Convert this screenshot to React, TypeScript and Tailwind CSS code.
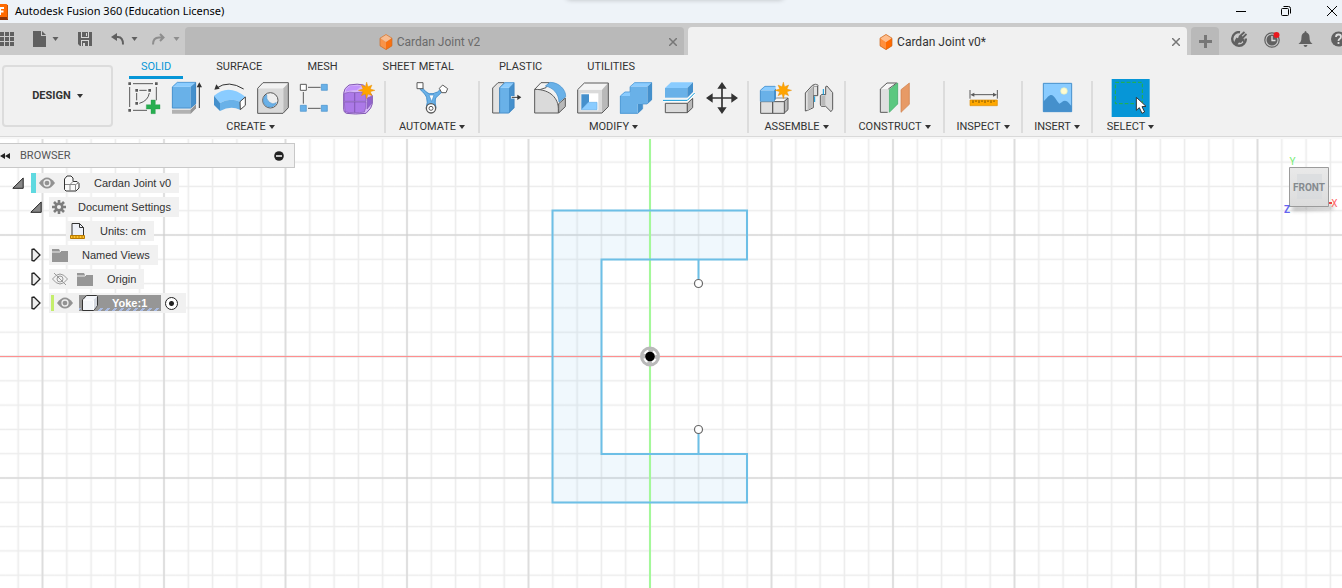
import React from "react";

const INK = "#5a5a5a";
const LIGHT = "#8accff";
const BLUE = "#69b1e8";
const DEEP = "#4590cc";

const STAR =
  "0,-25 4,-11 16,-16 11,-4 25,0 11,4 16,16 4,11 0,25 -4,11 -16,16 -11,4 -25,0 -11,-4 -16,-16 -4,-11";

function Glyph({ children }: { children: React.ReactNode }) {
  return (
    <svg viewBox="0 0 129 114" className="h-[38px] w-[43px]" aria-hidden="true">
      {children}
    </svg>
  );
}

function Caret({ className = "" }: { className?: string }) {
  return (
    <svg viewBox="0 0 6 4" className={`h-1 w-1.5 ${className}`} aria-hidden="true">
      <path d="M0 0h6L3 4z" fill="currentColor" />
    </svg>
  );
}

const SketchIcon = () => (
  <Glyph>
    <path d="M33 14h60M23 24v60M33 94h42M103 24v40M52 34h22M44 42v22M82 42q-4 24-30 31" fill="none" stroke={INK} strokeWidth="3" />
    <path d="M19 10h8v8h-8zM99 10h8v8h-8zM19 90h8v8h-8zM40 30h8v8h-8zM79 30h8v8h-8zM40 69h8v8h-8z" fill={INK} />
    <path d="M87 63h13v14h14v13h-14v14H87V90H73V77h14z" fill="#27ae50" stroke="#1f9445" strokeWidth="1" />
  </Glyph>
);

const ExtrudeIcon = () => (
  <Glyph>
    <path d="M21 92h56l16-16v12l-16 16H21z" fill="#b2b2b2" />
    <path d="M77 92l16-16v12l-16 16z" fill="#969696" />
    <path d="M21 23h56v65H21z" fill={BLUE} />
    <path d="M21 23L37 9h56L77 23z" fill={LIGHT} />
    <path d="M77 23L93 9v65L77 88z" fill={DEEP} />
    <path d="M22 24L37 10h55v64L77 87H22z" fill="none" stroke="#3c84bf" strokeWidth="2" />
    <path d="M103 20v67" stroke="#333" strokeWidth="3" />
    <path d="M103 10l8 15H95z" fill="#333" />
  </Glyph>
);

const RevolveIcon = () => (
  <Glyph>
    <path d="M26 27Q62 2 107 30" fill="none" stroke="#333" strokeWidth="3" />
    <path d="M19 32l6-16 10 13z" fill="#333" />
    <path d="M18 50Q62 12 113 54L96 68Q66 55 36 72z" fill={LIGHT} />
    <path d="M18 50l18 22v24L18 78z" fill={DEEP} />
    <path d="M36 72q30-17 60-4v24q-28-14-60 4z" fill={BLUE} />
    <path d="M96 68l16-14v25L97 92z" fill="#fff" stroke="#444" strokeWidth="3" />
  </Glyph>
);

const HoleIcon = () => (
  <Glyph>
    <path d="M19 28h78v75H19z" fill="#dadada" />
    <path d="M19 28l16-17h78L97 28z" fill="#f2f2f2" />
    <path d="M97 28l16-17v75l-16 17z" fill="#b9b9b9" />
    <path d="M20 28l16-17h76v75l-16 17H20z" fill="none" stroke={INK} strokeWidth="3" />
    <circle cx="58" cy="64" r="23" fill="#eee" stroke={INK} strokeWidth="3" />
    <path d="M47 47a20 20 0 1 0 29 24Q66 79 55 70T47 47z" fill={BLUE} stroke={DEEP} strokeWidth="2" />
  </Glyph>
);

const PatternIcon = () => (
  <Glyph>
    <path d="M42 25h38M28 39v35M42 88h38" stroke={INK} strokeWidth="3" />
    <path d="M19 16h18v18H19z" fill="#fff" stroke={INK} strokeWidth="3" />
    <path d="M82 16h18v18H82zM19 79h18v18H19zM82 79h18v18H82z" fill={BLUE} stroke={DEEP} strokeWidth="2" />
  </Glyph>
);

const FormIcon = () => (
  <Glyph>
    <path d="M20 43q0-15 16-25 27-5 44 0l26 32v24q-1 13-19 29-33 4-59 0-8-3-8-12z" fill="#d6b8f8" stroke="#8459b4" strokeWidth="3" />
    <path d="M22 43q17-6 31-2v26H22zM53 41q18-3 33 2l1 24H53zM22 69h31v31q-18 3-29-2zM53 69h34q0 20-5 30-13 3-29 2z" fill="#ac79e8" stroke="#8459b4" strokeWidth="2" />
    <path d="M27 32q8-12 18-12l29 0-15 14q-20-2-32 4z" fill="#c393fb" />
    <path d="M91 57l13-5v21l-14 17z" fill="#9161cf" stroke="#8459b4" strokeWidth="2" />
    <polygon points={STAR} transform="translate(89 34)" fill="#ffa400" stroke="#dd8700" strokeWidth="1" />
  </Glyph>
);

const AutomateIcon = () => (
  <Glyph>
    <path d="M31 22q16 22 25 22h10q13-1 28-18l6 8Q76 52 73 60q-2 11 2 26H46q5-17 1-30-2-9-21-26z" fill={BLUE} stroke={DEEP} strokeWidth="3" />
    <path d="M54 48h15l-7 20z" fill="#fff" stroke={DEEP} strokeWidth="2" />
    <path d="M18 11h18v18H18z" fill="#fff" stroke={INK} strokeWidth="3" />
    <path d="M85 28l10-10 15 11-5 12H92z" fill="#fff" stroke={INK} strokeWidth="3" />
    <circle cx="60" cy="88" r="14" fill="#fff" stroke={INK} strokeWidth="4" />
    <circle cx="60" cy="88" r="6" fill="#fff" stroke={INK} strokeWidth="3" />
  </Glyph>
);

const PressPullIcon = () => (
  <Glyph>
    <path d="M23 27l16-16h19L44 27v75H23z" fill="#e3e3e3" stroke={INK} strokeWidth="3" />
    <path d="M43 26h29v77H43z" fill={BLUE} />
    <path d="M43 26l16-16h29L72 26z" fill={LIGHT} />
    <path d="M72 26l16-16v77l-16 16z" fill={DEEP} />
    <path d="M44 26l16-15h27v75l-16 16H44z" fill="none" stroke="#3c84bf" strokeWidth="2" />
    <path d="M78 55h22" stroke="#fff" strokeWidth="7" />
    <path d="M80 55h20" stroke="#333" strokeWidth="3" />
    <path d="M97 47l12 8-12 8z" fill="#333" />
  </Glyph>
);

const FilletIcon = () => (
  <Glyph>
    <path d="M20 31l19-20h25L54 26l-22 7z" fill="#f4f4f4" stroke={INK} strokeWidth="3" />
    <path d="M92 74l20-17v26l-20 19z" fill="#b9b9b9" stroke={INK} strokeWidth="3" />
    <path d="M20 31c49 0 71 29 71 58v13H20z" fill="#dadada" stroke={INK} strokeWidth="3" />
    <path d="M52 21l14-11c28 0 48 23 47 43L93 69C92 44 76 26 52 21z" fill={BLUE} stroke={DEEP} strokeWidth="2" />
  </Glyph>
);

const ShellIcon = () => (
  <Glyph>
    <path d="M20 32h73v71H20z" fill="#dadada" />
    <path d="M20 32l20-21h72L93 32z" fill="#f4f4f4" />
    <path d="M93 32l19-21v71l-19 21z" fill="#b9b9b9" />
    <path d="M20 32l20-20h72v71l-19 19H20z" fill="none" stroke={INK} strokeWidth="3" />
    <path d="M29 43h53v51H29z" fill="#fff" />
    <path d="M31 46h23v24L31 92z" fill={DEEP} />
    <path d="M31 92l21-22h26v22z" fill={LIGHT} stroke={BLUE} strokeWidth="2" />
  </Glyph>
);

const CombineIcon = () => (
  <Glyph>
    <path d="M18 51l14-13h16v13zM48 23l14-13h52l-14 13z" fill={LIGHT} />
    <path d="M100 23l14-13v52l-14 13zM71 75h15v15l-15 14z" fill={DEEP} />
    <path d="M48 23h52v52H71v29H18V51h30z" fill={BLUE} />
    <path d="M19 51l14-12h15V23l14-12h51v51l-14 13H86v14l-15 14H19z" fill="none" stroke={DEEP} strokeWidth="2" />
  </Glyph>
);

const SplitIcon = () => (
  <Glyph>
    <path d="M24 27h67v29H24z" fill={BLUE} />
    <path d="M24 27l18-17h66L91 27z" fill={LIGHT} />
    <path d="M91 27l17-17v29L91 56z" fill={DEEP} />
    <path d="M25 73h66v28H25z" fill="#dadada" stroke={INK} strokeWidth="3" />
    <path d="M91 73l16-15v28l-16 15z" fill="#b9b9b9" stroke={INK} strokeWidth="3" />
    <path d="M18 64h73l22-22" fill="none" stroke="#fff" strokeWidth="9" />
    <path d="M18 64h73l22-22" fill="none" stroke="#0696d7" strokeWidth="3" />
  </Glyph>
);

const MoveIcon = () => (
  <Glyph>
    <path d="M66 22v70M31 57h70" stroke="#333" strokeWidth="5" />
    <path d="M66 9l14 20H52zM66 105l14-20H52zM18 57l20-14v28zM114 57L94 43v28z" fill="#333" />
  </Glyph>
);

const ComponentIcon = () => (
  <Glyph>
    <path d="M56 68l12-11h34L90 68z" fill="#f6f6f6" stroke={INK} strokeWidth="2" />
    <path d="M90 68l12-11v35l-12 11z" fill="#b9b9b9" stroke={INK} strokeWidth="3" />
    <path d="M20 68h36v35H20zM56 68h35v35H56z" fill="#dfdfdf" stroke={INK} strokeWidth="3" />
    <path d="M18 34h43v34H18z" fill={BLUE} />
    <path d="M18 34l14-13h35L61 34z" fill={LIGHT} />
    <path d="M60 34l6-6v30l-6 10z" fill={DEEP} />
    <path d="M19 67V34l14-12h30" fill="none" stroke="#3c84bf" strokeWidth="2" />
    <polygon points={STAR} transform="translate(88 34)" fill="#ffa400" stroke="#dd8700" strokeWidth="1" />
  </Glyph>
);

const JointIcon = () => (
  <Glyph>
    <path d="M25 42l21-23q8-6 16-1v32H49v36L32 94l-7 2z" fill="#e2e2e2" stroke={INK} strokeWidth="3" />
    <path d="M32 38l15-16v61l-15 12z" fill="#bdbdbd" />
    <path d="M62 20v29M49 22v28" stroke={INK} strokeWidth="2" />
    <path d="M86 23l4-2 17 20v50l-5 7-16-16H73q-3-2-3-7V50q2-6 16-3z" fill="#dadada" stroke={INK} strokeWidth="3" />
    <path d="M73 50h12v29H73z" fill="#b9b9b9" />
    <ellipse cx="56" cy="19" rx="7" ry="3" fill="#fff" stroke={INK} strokeWidth="2" />
    <path d="M53 52v17M79 30v18" stroke="#0696d7" strokeWidth="3" />
  </Glyph>
);

const PlaneIcon = () => (
  <Glyph>
    <path d="M22 30l20-18h29L46 31v69H22z" fill="#dfdfdf" />
    <path d="M22 30l20-18h29L46 30z" fill="#f6f6f6" />
    <path d="M46 30L71 12H42L22 30v70h22" fill="none" stroke={INK} strokeWidth="3" />
    <path d="M49 32l25-20v63L49 100z" fill="#5bc880" stroke="#35a55f" strokeWidth="2" />
    <path d="M84 32l25-20v64L84 100z" fill="#e79a66" stroke="#cf7c46" strokeWidth="2" />
  </Glyph>
);

const MeasureIcon = () => (
  <Glyph>
    <path d="M24 33v26M106 33v26M30 47h70" stroke={INK} strokeWidth="3" />
    <path d="M25 47l12-6v12zM105 47l-12-6v12z" fill={INK} />
    <path d="M24 63h82v17H24z" fill="#ffa800" stroke="#dd8c00" strokeWidth="2" />
    <path d="M33 64v8M42 64v5M51 64v8M60 64v5M69 64v8M78 64v5M87 64v8M96 64v5" stroke="#7b5300" strokeWidth="3" />
  </Glyph>
);

const PictureIcon = () => (
  <Glyph>
    <path d="M22 13h85v85H22z" fill={LIGHT} />
    <circle cx="84" cy="36" r="10" fill="#fffbd0" stroke="#dcecc0" strokeWidth="2" />
    <path d="M22 68C36 54 38 48 46 48s16 18 24 26c8-4 10-9 17-9 8 0 12 9 20 16v17H22z" fill={DEEP} />
    <path d="M22 13h85v85H22z" fill="none" stroke={DEEP} strokeWidth="3" />
  </Glyph>
);

const SelectIcon = () => (
  <Glyph>
    <path d="M8 0h114v114H8z" fill="#0696d7" />
    <path d="M19 10h81v64H19z" fill="none" stroke="#27b43c" strokeWidth="3" strokeDasharray="11 6" />
    <path d="M82 55v39l9-8 8 17 8-4-8-16 12-1z" fill="#fff" stroke="#333" strokeWidth="3" />
  </Glyph>
);

const groups = [
  { name: "CREATE", width: "w-[269px]", tools: [["Create Sketch", SketchIcon], ["Extrude", ExtrudeIcon], ["Revolve", RevolveIcon], ["Hole", HoleIcon], ["Pattern", PatternIcon], ["Create Form", FormIcon]] },
  { name: "AUTOMATE", width: "w-[94px]", tools: [["Automate", AutomateIcon]] },
  { name: "MODIFY", width: "w-[269px]", tools: [["Press Pull", PressPullIcon], ["Fillet", FilletIcon], ["Shell", ShellIcon], ["Combine", CombineIcon], ["Split Body", SplitIcon], ["Move", MoveIcon]] },
  { name: "ASSEMBLE", width: "w-[97px]", tools: [["New Component", ComponentIcon], ["Joint", JointIcon]] },
  { name: "CONSTRUCT", width: "w-[99px]", tools: [["Offset Plane", PlaneIcon]] },
  { name: "INSPECT", width: "w-[78px]", tools: [["Measure", MeasureIcon]] },
  { name: "INSERT", width: "w-[70px]", tools: [["Canvas", PictureIcon]] },
  { name: "SELECT", width: "w-[75px]", tools: [["Select", SelectIcon]] },
] as { name: string; width: string; tools: [string, React.FC][] }[];

const workspaces = ["SOLID", "SURFACE", "MESH", "SHEET METAL", "PLASTIC", "UTILITIES"];

function TitleBar() {
  return (
    <header className="relative flex h-[23px] items-center overflow-hidden bg-[#eef3f8]">
      <svg viewBox="0 0 9 18" className="h-[18px] w-[9px] shrink-0" aria-hidden="true">
        <path d="M0 1h6.500l1 1v14H0z" fill="#ff6a00" />
        <path d="M0 14h8v3H0z" fill="#8a3408" />
        <path d="M7.500 2v14" stroke="#c85406" />
        <path d="M0 4h4v2H1v1.500h2.500v2H1V12H0z" fill="#fff" />
      </svg>
      <h1 className="ml-1.5 font-['Noto_Sans',sans-serif] text-[11px] text-black">Autodesk Fusion 360 (Education License)</h1>
      <div className="absolute -top-3 left-[565px] h-3 w-[220px] rounded-lg bg-[#ddd] shadow-[0_0_5px_rgba(0,0,0,0.22)]" />
      <div className="ml-auto flex items-center">
        <button aria-label="Minimize" className="flex h-[23px] w-[46px] items-center justify-center">
          <svg viewBox="0 0 12 12" className="size-3"><path d="M1 5.500h10" stroke="#000" /></svg>
        </button>
        <button aria-label="Restore" className="flex h-[23px] w-11 items-center justify-center">
          <svg viewBox="0 0 12 12" className="size-3" fill="none" stroke="#000">
            <rect x="1.5" y="2.5" width="7" height="7" rx="1" />
            <path d="M3.500.5h5q2 0 2 2v5" />
          </svg>
        </button>
        <button aria-label="Close" className="flex h-[23px] w-[34px] items-center justify-center pl-3.5">
          <svg viewBox="0 0 12 12" className="size-3"><path d="M1 0l10 10M11 0L1 10" stroke="#000" /></svg>
        </button>
      </div>
    </header>
  );
}

function OrangeCube({ faded = false }: { faded?: boolean }) {
  return (
    <svg viewBox="0 0 14 16" className={`h-4 w-3.5 shrink-0 ${faded ? "opacity-90" : ""}`} aria-hidden="true">
      <path d="M7 0l6 4-6 4-6-4z" fill="#ffbd8c" />
      <path d="M1 4l6 4v8l-6-4z" fill="#ff8f3d" />
      <path d="M13 4L7 8v8l6-4z" fill="#ff6a00" />
      <path d="M7 .5l6 3.700v7.600l-6 3.700-6-3.700V4.200z" fill="none" stroke="#c9671f" strokeWidth=".7" />
    </svg>
  );
}

function DocTab({ title, active = false }: { title: string; active?: boolean }) {
  return (
    <div className={`flex min-w-0 flex-1 items-center rounded-t-[4px] pt-0.5 pr-1 ${active ? "bg-[#f1f1f1] text-[#333]" : "bg-[#b9b9b9] text-[#6a6a6a]"}`}>
      <button className="flex min-w-0 flex-1 items-center justify-center gap-1 pl-2 text-[12px]">
        <OrangeCube faded={!active} />
        <span className="truncate">{title}</span>
      </button>
      <button aria-label={`Close ${title}`} className="p-[3px] text-[#777]">
        <svg viewBox="0 0 8 8" className="size-2"><path d="M0 0l8 8M8 0L0 8" stroke="currentColor" strokeWidth="1.5" /></svg>
      </button>
    </div>
  );
}

function DocumentBar() {
  return (
    <div className="flex h-8 bg-[#cacaca] pt-1">
      <div className="flex w-[185px] shrink-0 items-center pb-1 text-[#606060]">
        <button aria-label="Data Panel" className="w-[33px]">
          <svg viewBox="0 0 14 14" className="size-3.5" fill="currentColor">
            <path d="M0 0h4v4H0zM5 0h4v4H5zM10 0h4v4h-4zM0 5h4v4H0zM5 5h4v4H5zM10 5h4v4h-4zM0 10h4v4H0zM5 10h4v4H5zM10 10h4v4h-4z" />
          </svg>
        </button>
        <button aria-label="File" className="flex w-[45px] items-center gap-1.5">
          <svg viewBox="0 0 13 16" className="h-4 w-[13px]" fill="currentColor"><path d="M0 0h8v5h5v11H0zM9 0l4 4H9z" /></svg>
          <Caret className="w-[7px]" />
        </button>
        <button aria-label="Save" className="w-[33px]">
          <svg viewBox="0 0 14 14" className="size-3.5">
            <path d="M0 0h14v14H2l-2-2z" fill="currentColor" />
            <path d="M3 0h1v5h6V0h1v6H3zM3 8h8v6h-1V9H4v5H3z" fill="#d6d6d6" />
            <path d="M8 1h1v3H8zM5 11h2v3H5z" fill="#d6d6d6" />
          </svg>
        </button>
        <button aria-label="Undo" className="flex w-10 items-center gap-1.5">
          <svg viewBox="0 0 14 12" className="h-3 w-3.5"><path d="M6 0v8L0 4z" fill="currentColor" /><path d="M4 4h3q5 0 5 7.500" fill="none" stroke="currentColor" strokeWidth="2" /></svg>
          <Caret className="w-[7px]" />
        </button>
        <button aria-label="Redo" className="flex items-center gap-2 text-[#8e8e8e]">
          <svg viewBox="0 0 14 12" className="h-3 w-3.5"><path d="M9 1l3.500 3.500L9 8M12 4.500H8q-6 0-6 7" fill="none" stroke="currentColor" strokeWidth="2" /></svg>
          <Caret className="w-[7px]" />
        </button>
      </div>
      <div className="flex min-w-0 flex-1 gap-1">
        <DocTab title="Cardan Joint v2" />
        <DocTab title="Cardan Joint v0*" active />
      </div>
      <div className="flex w-[155px] shrink-0 overflow-hidden pl-1 text-[#606060]">
        <button aria-label="New Design" className="flex w-7 shrink-0 items-center justify-center rounded-t-[4px] bg-[#b9b9b9]">
          <svg viewBox="0 0 13 13" className="size-[13px]"><path d="M6.500 0v13M0 6.500h13" stroke="#777" strokeWidth="3" /></svg>
        </button>
        <div className="flex items-center gap-[17px] pb-1 pl-3">
          <button aria-label="Extensions" className="shrink-0">
            <svg viewBox="0 0 16 16" className="size-4">
              <path d="M9 1.200A6.800 6.800 0 1 0 14.800 7.500" fill="none" stroke="currentColor" strokeWidth="2.400" />
              <path d="M2.500 13l1.500-4 1.500-2.500 1.500 1 1-1.500 1.500 1.500 1-2 1.500 1.500 1.500 2-.5 3-1.500-2-1.500 2-2-.5-2 2.500z" fill="currentColor" />
              <path d="M8 6l5.500-5M11 7.500L15.500 3" stroke="currentColor" strokeWidth="1.800" />
              <path d="M7 9l4-4" stroke="currentColor" strokeWidth="3" />
            </svg>
          </button>
          <button aria-label="Job Status" className="shrink-0">
            <svg viewBox="0 0 17 17" className="size-[17px]">
              <circle cx="8" cy="9" r="7.200" fill="none" stroke="currentColor" strokeWidth="1.200" />
              <circle cx="8" cy="9" r="5.500" fill="currentColor" />
              <path d="M8 5v4.500h3.500" fill="none" stroke="#e0e0e0" strokeWidth="1.300" />
              <circle cx="12.500" cy="4" r="3" fill="#e9191e" />
            </svg>
          </button>
          <button aria-label="Notifications" className="shrink-0">
            <svg viewBox="0 0 16 16" className="size-4" fill="currentColor">
              <path d="M7.500 0q1 0 1 1.500 3 1 3 4.500 0 3.500 1 5 1 1 2 2H.5q1-1 2-2 1-1.500 1-5 0-3.500 3-4.500 0-1.500 1-1.500zM5.500 14h4q-.5 2-2 2t-2-2z" />
            </svg>
          </button>
          <button aria-label="Help" className="shrink-0">
            <svg viewBox="0 0 16 16" className="size-4">
              <circle cx="7.500" cy="8" r="7.500" fill="currentColor" />
              <path d="M5 6q0-2.500 2.500-2.500T10 5.700Q10 7 8.500 8q-1 .7-1 2M7.500 11v2" fill="none" stroke="#ddd" strokeWidth="1.800" />
            </svg>
          </button>
        </div>
      </div>
    </div>
  );
}

function Ribbon() {
  return (
    <div className="border-b-2 border-[#f7f7f7] bg-[#f1f1f1]">
      <div className="flex overflow-hidden border-b border-[#d9d9d9]">
        <button className="mt-[10px] ml-[2px] flex h-[62px] w-[111px] shrink-0 items-center justify-center gap-1.5 rounded-[4px] border-2 border-[#dcdcdc] text-[11px] font-bold text-[#333]">
          DESIGN <Caret />
        </button>
        <div className="ml-1 flex flex-col">
          <nav className="flex h-6 gap-[21px] pl-3">
            {workspaces.map((name, i) => (
              <button
                key={name}
                className={`h-6 border-b-3 px-3 pt-0.5 text-[11px] leading-[19px] whitespace-nowrap ${i === 0 ? "border-[#0696d7] text-[#0696d7]" : "border-transparent text-[#333]"}`}
              >
                {name}
              </button>
            ))}
          </nav>
          <div className="flex pb-px">
            {groups.map((g) => (
              <section key={g.name} className={`flex shrink-0 ${g.width}`}>
                <div className="flex flex-1 flex-col items-center">
                  <div className="flex">
                    {g.tools.map(([label, Icon]) => (
                      <button key={label} aria-label={label} title={label}>
                        <Icon />
                      </button>
                    ))}
                  </div>
                  <button className="mt-0.5 flex h-4 items-center gap-[3px] text-[11px] whitespace-nowrap text-[#333]">
                    {g.name} <Caret />
                  </button>
                </div>
                {g.name !== "SELECT" && <div className="my-0.5 w-0.5 bg-[#dcdcdc]" />}
              </section>
            ))}
          </div>
        </div>
      </div>
    </div>
  );
}

function SketchCanvas() {
  return (
    <svg className="absolute inset-0 h-full w-full" aria-label="Sketch of the yoke profile">
      <defs>
        <pattern id="minor" x="30.35" y="83.85" width="24.3" height="24.3" patternUnits="userSpaceOnUse">
          <path d="M12.150 0v24.300M0 12.150h24.300" stroke="#ececec" strokeWidth="1.600" />
        </pattern>
        <pattern id="major" x="-18.250" y="35.250" width="121.5" height="121.5" patternUnits="userSpaceOnUse">
          <path d="M60.750 0v121.500M0 60.750h121.500" stroke="#cdcdcd" />
        </pattern>
      </defs>
      <rect width="100%" height="100%" fill="#fff" />
      <rect width="100%" height="100%" fill="url(#minor)" />
      <rect width="100%" height="100%" fill="url(#major)" />
      <path d="M552.500 71.500H747v49H601.500v194.500H747v48.500H552.500z" fill="#69bbe8" fillOpacity=".1" />
      <path d="M0 217.500h4000" stroke="#ff8f8f" />
      <path d="M650 0v4000" stroke="#a4f89a" strokeWidth="2" />
      <path d="M552.500 71.500H747v49H601.500v194.500H747v48.500H552.500zM698.500 120v20M698.500 315v-21" fill="none" stroke="#6dbfe6" strokeWidth="2" />
      <circle cx="698.500" cy="144.500" r="4" fill="#fff" stroke="#666" strokeWidth="1.200" />
      <circle cx="698.500" cy="290.500" r="4" fill="#fff" stroke="#666" strokeWidth="1.200" />
      <circle cx="650" cy="217.500" r="8.500" fill="#fff" fillOpacity=".7" stroke="#b9b9b9" strokeWidth="3" />
      <circle cx="650" cy="217.500" r="6" fill="none" stroke="#bbb" strokeWidth="3" strokeDasharray="4.700 4.700" strokeDashoffset="2.350" />
      <circle cx="650" cy="217.500" r="4.800" fill="#000" />
    </svg>
  );
}

function Arrow({ open = false }: { open?: boolean }) {
  return (
    <button aria-label={open ? "Collapse" : "Expand"} className={`flex w-5 shrink-0 items-center ${open ? "pl-[3px]" : "pl-1"}`}>
      {open ? (
        <svg viewBox="0 0 12 12" className="size-3">
          <path d="M.8 11.300L11.200 1v10.300z" fill="#888" stroke="#222" />
        </svg>
      ) : (
        <svg viewBox="0 0 11 14" className="h-3.5 w-[11px]">
          <path d="M1 1.500l2-.5 6 6-6 6-2-.5z" fill="#eee" stroke="#222" strokeWidth="1.300" />
        </svg>
      )}
    </button>
  );
}

function Eye() {
  return (
    <svg viewBox="0 0 16 12" className="h-3 w-4 shrink-0" aria-hidden="true">
      <path d="M0 6q8-11 16 0-8 11-16 0z" fill="#929292" />
      <circle cx="8" cy="6" r="3" fill="#929292" stroke="#eee" strokeWidth="1.300" />
    </svg>
  );
}

function EyeOff() {
  return (
    <svg viewBox="0 0 16 12" className="h-3 w-4 shrink-0" fill="none" stroke="#999" aria-hidden="true">
      <path d="M.5 6q7.500-10 15 0-7.500 10-15 0zM2 0l12 12" />
      <circle cx="8" cy="6" r="3" />
    </svg>
  );
}

function Folder() {
  return (
    <svg viewBox="0 0 16 13" className="h-[13px] w-4 shrink-0" aria-hidden="true">
      <path d="M0 0h7l1 2h8v11H0z" fill="#969696" />
      <path d="M0 3h8l1-1" stroke="#eee" fill="none" />
    </svg>
  );
}

function Gear() {
  return (
    <svg viewBox="0 0 14 14" className="size-3.5 shrink-0" aria-hidden="true">
      <path d="M7 0v14M0 7h14M2 2l10 10M12 2L2 12" stroke="#7d7d7d" strokeWidth="2.600" />
      <circle cx="7" cy="7" r="3.300" fill="#eee" stroke="#7d7d7d" strokeWidth="2.500" />
    </svg>
  );
}

function TreeCubes() {
  return (
    <svg viewBox="0 0 17 17" className="size-[17px] shrink-0" fill="#fafafa" stroke="#333" strokeLinejoin="round" aria-hidden="true">
      <path d="M1.500 4l2.500-3h4l2 2v3.500h4l2 2V13l-3 3H3l-1.500-1.500z" />
      <path d="M2 9.500h5V16M7 9.500L10 6.500M7 9.500h5.500V16M12.500 9.500l3-1.500" fill="none" stroke="#888" />
    </svg>
  );
}

function TreeDocument() {
  return (
    <svg viewBox="0 0 16 16" className="size-4 shrink-0" aria-hidden="true">
      <path d="M2 12V.5h7.500l4 4V12" fill="#eef1f8" stroke="#333" />
      <path d="M9.500.5v4h4" fill="none" stroke="#333" />
      <path d="M.5 12.500h14v3H.5z" fill="#ffc42e" stroke="#b87900" />
      <path d="M3 13v2M6 13v2M9 13v2M12 13v2" stroke="#b87900" />
    </svg>
  );
}

function TreeBody() {
  return (
    <svg viewBox="0 0 16 16" className="size-4 shrink-0" strokeLinejoin="round" aria-hidden="true">
      <path d="M.5 5l4-4.500h10l1 1v9l-4 5H.5z" fill="#f4f6fa" stroke="#333" />
      <path d="M11.500 15V5L15 1.500v9z" fill="#d4d8e0" />
      <path d="M1 5h9.500q1 0 1 1v9" fill="none" stroke="#fff" />
    </svg>
  );
}

const pill = "flex h-5 items-center bg-[#f1f1f1]";

function Browser() {
  return (
    <aside className="relative w-[295px] pt-1 font-['Liberation_Sans',Arial,sans-serif] text-[11px] text-[#333]">
      <div className="flex h-[25px] items-center border border-l-0 border-[#c8c8c8] bg-[#f1f1f1] pr-2.5 font-['Roboto',sans-serif]">
        <button aria-label="Collapse browser" className="w-5">
          <svg viewBox="0 0 10 6" className="h-1.5 w-2.5"><path d="M5 0v6L0 3zM10 0v6L5 3z" fill="#222" /></svg>
        </button>
        <h2 className="flex-1 pt-0.5 text-[#555]">BROWSER</h2>
        <button aria-label="Hide all">
          <svg viewBox="0 0 10 10" className="size-2.5"><circle cx="5" cy="5" r="4.800" fill="#222" /><path d="M2 5h6" stroke="#fff" strokeWidth="1.500" /></svg>
        </button>
      </div>
      <ul className="pt-[3px]">
        <li className="flex h-6 items-center pl-[9px]">
          <Arrow open />
          <div className={`${pill} ml-0.5 pr-2`}>
            <span className="mr-[3px] h-5 w-[5px] bg-[#5fd9e0]" />
            <Eye />
            <span className="ml-2 mr-3.5 flex"><TreeCubes /></span>
            Cardan Joint v0
          </div>
        </li>
        <li className="flex h-6 items-center pl-[27px]">
          <Arrow open />
          <div className={`${pill} ml-0.5 gap-3 pr-2 pl-[3px]`}>
            <Gear />
            Document Settings
          </div>
        </li>
        <li className="flex h-6 items-center pl-[66px]">
          <div className={`${pill} gap-3.5 pr-2 pl-1`}>
            <TreeDocument />
            Units: cm
          </div>
        </li>
        <li className="flex h-6 items-center pl-[27px]">
          <Arrow />
          <div className={`${pill} ml-0.5 gap-3.5 pr-2 pl-[3px]`}>
            <Folder />
            Named Views
          </div>
        </li>
        <li className="flex h-6 items-center pl-[27px]">
          <Arrow />
          <div className={`${pill} ml-0.5 pr-2 pl-[3px]`}>
            <EyeOff />
            <span className="ml-[9px] mr-3.5 flex"><Folder /></span>
            Origin
          </div>
        </li>
        <li className="flex h-6 items-center pl-[27px]">
          <Arrow />
          <label className={`${pill} ml-0.5 pr-2 pl-0.5`}>
            <span className="mr-[3px] h-4 w-[3px] bg-[#c4ee6b]" />
            <Eye />
            <span className="relative mr-1 ml-1.5 flex h-4 items-center gap-3.5 bg-[#969696] pr-3.5 pl-[3px] font-bold text-white">
              <span className="absolute inset-x-0 bottom-0 h-[3px] bg-[repeating-linear-gradient(135deg,#a9bbe2_0px,#a9bbe2_2px,#969696_2px,#969696_5px)]" />
              <span className="relative flex"><TreeBody /></span>
              <span className="relative">Yoke:1</span>
            </span>
            <input
              type="radio"
              name="active-component"
              defaultChecked
              className="size-[13px] appearance-none rounded-full border border-[#222] bg-[radial-gradient(circle,#222_0px,#222_2px,#fff_3px)]"
            />
          </label>
        </li>
      </ul>
    </aside>
  );
}

function ViewCube() {
  return (
    <div className="absolute top-3 right-0">
      <svg viewBox="0 0 62 64" className="h-16 w-[62px]" aria-label="View cube">
        <defs>
          <linearGradient id="face" x1="0" y1="0" x2="0" y2="1">
            <stop offset="0" stopColor="#e9e9e9" />
            <stop offset="1" stopColor="#dcdcdc" />
          </linearGradient>
          <filter id="shade" x="-20%" y="-100%" width="140%" height="300%"><feGaussianBlur stdDeviation="2" /></filter>
        </defs>
        <path d="M12 56h38l4-2-2 4-40 1z" fill="#666" opacity=".7" filter="url(#shade)" />
        <path d="M9.500 16.500h39v39h-39z" fill="url(#face)" stroke="#9b9b9b" />
        <path d="M17 23h25v25H17z" fill="#d5d9dc" opacity=".6" />
        <text x="29" y="40" textAnchor="middle" className="font-['Roboto',sans-serif] text-[10px] font-bold" fill="#858a8e">FRONT</text>
        <text x="12.500" y="14" textAnchor="middle" className="font-['Roboto',sans-serif] text-[10px]" fill="#74ec74">Y</text>
        <text x="54.500" y="56" textAnchor="middle" className="font-['Roboto',sans-serif] text-[10px]" fill="#f66">X</text>
        <text x="7" y="62" textAnchor="middle" className="font-['Roboto',sans-serif] text-[10px] font-bold" fill="#6565f0">Z</text>
        <path d="M49 52h3" stroke="#e44" strokeWidth="2" />
      </svg>
    </div>
  );
}

export default function App() {
  return (
    <div className="flex h-screen flex-col overflow-hidden font-['Roboto',sans-serif]">
      <TitleBar />
      <DocumentBar />
      <Ribbon />
      <main className="relative flex-1 overflow-hidden bg-white">
        <SketchCanvas />
        <Browser />
        <ViewCube />
      </main>
    </div>
  );
}
